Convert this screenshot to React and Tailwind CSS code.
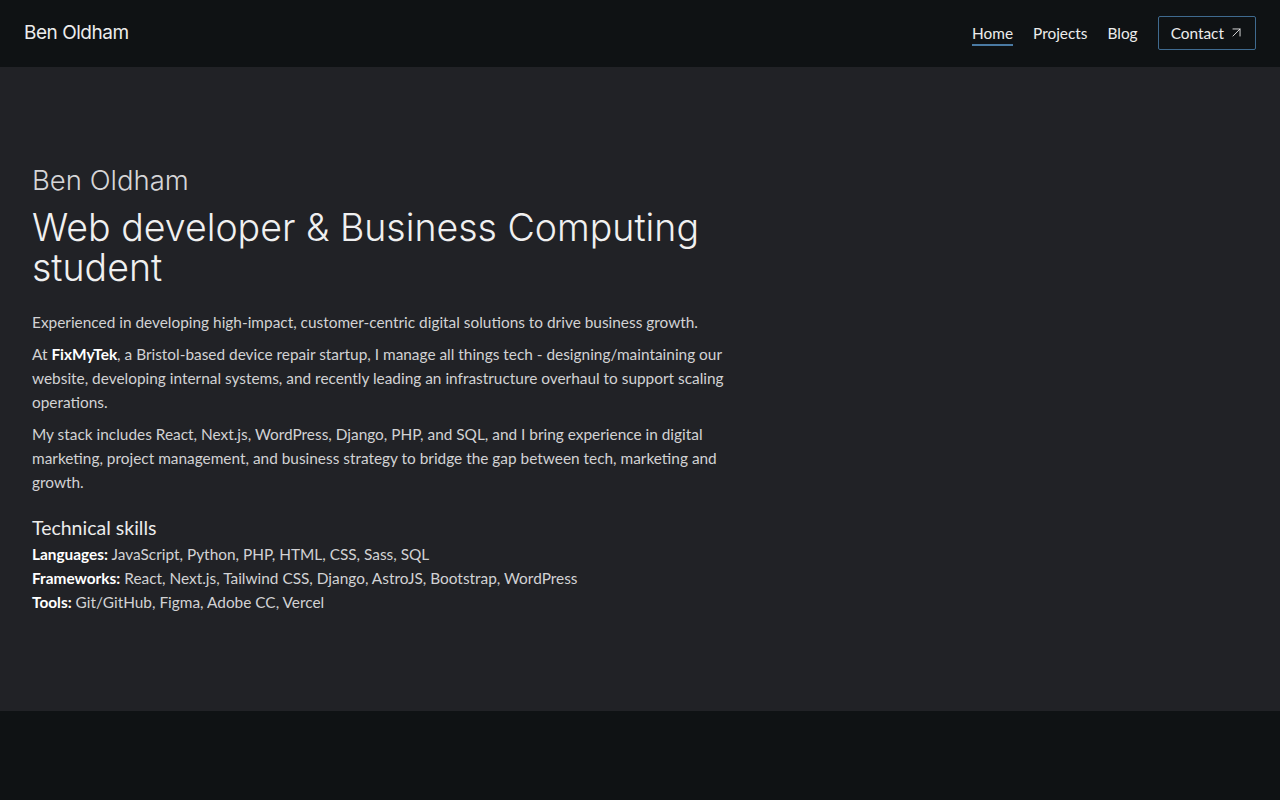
import { ArrowUpRight } from 'lucide-react';

const body = { fontFamily: 'Lato, "Noto Sans", sans-serif' };

const skills = [
  { label: 'Languages:', items: 'JavaScript, Python, PHP, HTML, CSS, Sass, SQL' },
  { label: 'Frameworks:', items: 'React, Next.js, Tailwind CSS, Django, AstroJS, Bootstrap, WordPress' },
  { label: 'Tools:', items: 'Git/GitHub, Figma, Adobe CC, Vercel' },
];

const Header = () => (
  <header className="h-[67px] bg-[#0f1214] flex items-center justify-between px-6">
    <a className="text-[19px] text-[#ececec] font-['Inter'] tracking-tight">Ben Oldham</a>
    <nav className="flex items-center gap-5 text-[15.4px] leading-5 text-[#ececec] pb-[2px]" style={body}>
      <a className="py-[1px] border-y-2 border-transparent border-b-[#4a7aa3]">Home</a>
      <a className="py-[1px] border-y-2 border-transparent">Projects</a>
      <a className="py-[1px] border-y-2 border-transparent">Blog</a>
      <a className="flex items-center gap-1 border border-[#3f6a8f] rounded-[2px] pl-3 pr-[10px] h-[34px]">
        Contact <ArrowUpRight size={17} strokeWidth={1.25} />
      </a>
    </nav>
  </header>
);

export default function App() {
  return (
    <div className="min-h-[800px] bg-[#0f1214]">
      <Header />
      <main className="bg-[#212226] pt-[95px] pb-[97px] px-8">
        <div className="max-w-[720px] text-[15.4px] leading-6 text-[#d2d2d4]" style={body}>
          <h1 className="font-['Inter'] font-light text-[27.5px] leading-[36px] text-[#d6d6d8]">Ben Oldham</h1>
          <h2 className="font-['Inter'] font-light text-[37.5px] leading-[40px] text-[#f0f0f0] mt-[10px] mb-[22px]">
            Web developer &amp; Business Computing student
          </h2>
          <p className="mb-2">Experienced in developing high-impact, customer-centric digital solutions to drive business growth.</p>
          <p className="mb-2">
            At <strong className="font-bold text-white">FixMyTek</strong>, a Bristol-based device repair startup, I manage all things tech - designing/maintaining our website, developing internal systems, and recently leading an infrastructure overhaul to support scaling operations.
          </p>
          <p className="mb-2">
            My stack includes React, Next.js, WordPress, Django, PHP, and SQL, and I bring experience in digital marketing, project management, and business strategy to bridge the gap between tech, marketing and growth.
          </p>
          <h3 className="text-[19.5px] leading-7 text-[#ececec] mt-5">Technical skills</h3>
          {skills.map((s) => (
            <p key={s.label}>
              <span className="text-white font-bold">{s.label}</span> {s.items}
            </p>
          ))}
        </div>
      </main>
      <footer className="h-[89px] bg-[#0f1214]" />
    </div>
  );
}
